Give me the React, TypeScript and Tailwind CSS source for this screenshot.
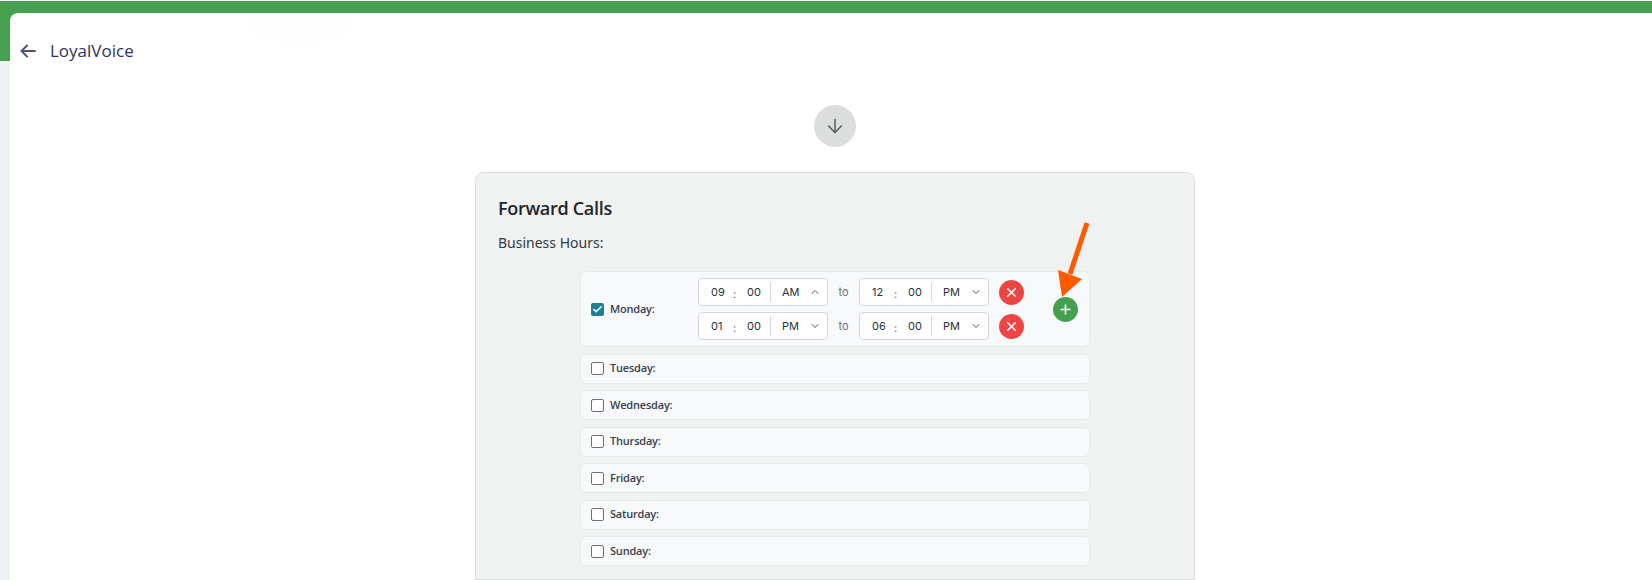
import React from 'react';
import { ArrowDown, ChevronUp, ChevronDown, X, Plus, Check } from 'lucide-react';

const noto = { fontFamily: '"Noto Sans", "Open Sans", sans-serif' };

interface TimeRange { hour: string; minute: string; period: string; open?: boolean; }

const TimeBox = ({ hour, minute, period, open }: TimeRange) => (
  <div className="flex items-center w-[130px] h-[28px] bg-white border border-[#d3d6de] rounded-[4px] text-[11px] text-[#2b3040] font-['Inter',sans-serif]">
    <span className="w-[34px] pl-[12px]">{hour}</span>
    <span className="w-[9px] text-[#6b7280] pt-[4px]">:</span>
    <span className="w-[28px] pl-[5px]">{minute}</span>
    <div className="w-px h-[20px] bg-[#d3d6de]" />
    <span className="w-[38px] pl-[11px]">{period}</span>
    {open ? <ChevronUp size={12} strokeWidth={2} className="text-[#4b5160]" /> : <ChevronDown size={12} strokeWidth={2} className="text-[#4b5160]" />}
  </div>
);

const RemoveButton = () => (
  <div className="w-[25px] h-[25px] rounded-full bg-[#ef4444] flex items-center justify-center text-white ml-[10px]">
    <X size={15} strokeWidth={2.5} />
  </div>
);

const Slot = ({ from, to }: { from: TimeRange; to: TimeRange }) => (
  <div className="flex items-center">
    <TimeBox {...from} />
    <span className="w-[31px] text-center text-[11px] text-[#6b7280] font-['Inter',sans-serif]">to</span>
    <TimeBox {...to} />
    <RemoveButton />
  </div>
);

const DayRow = ({ day }: { day: string }) => (
  <div className="flex items-center h-[30px] pl-[10px] bg-[#f8f9fb] border border-[#e8e9ec] rounded-[6px]">
    <div className="w-[13px] h-[13px] bg-white border border-[#6d6f75] rounded-[2px]" />
    <span className="ml-[6px] text-[11px] font-semibold text-[#374151] font-['Open_Sans',sans-serif] tracking-[-0.2px]">{day}</span>
  </div>
);

export default function App() {
  return (
    <div className="relative flex w-[1652px] h-[580px] overflow-hidden bg-white pt-px" style={noto}>
      <div className="w-[10px] flex flex-col shrink-0">
        <div className="h-[60px] bg-[#45a150]" />
        <div className="flex-1 bg-[#eef0f7]" />
      </div>
      <div className="flex-1 flex flex-col bg-[#45a150]">
        <div className="h-[12px] shrink-0" />
        <div className="relative flex-1 bg-white rounded-tl-[8px] flex flex-col overflow-hidden">
          {/* faint watermark behind the header */}
          <div className="absolute left-[235px] -top-[10px] w-[110px] h-[40px] rounded-b-full bg-[#fdfefd] blur-[6px]" />
          <div className="relative flex items-center h-[72px] pl-[10px] pt-[3px] shrink-0">
            <svg width="16" height="14" viewBox="0 0 16 14" fill="none" stroke="#4b5578" strokeWidth="2" strokeLinecap="round" strokeLinejoin="round">
              <path d="M15 7H2" />
              <path d="M7 1.5L1.5 7L7 12.5" />
            </svg>
            <span className="ml-[14px] text-[17px] font-medium text-[#2f3160] font-['Open_Sans',sans-serif]">LoyalVoice</span>
          </div>
          <div className="flex justify-center pl-[8px] pt-[20px] shrink-0">
            <div className="w-[42px] h-[42px] rounded-full bg-[#dcdedd] flex items-center justify-center text-[#55595c]">
              <ArrowDown size={22} strokeWidth={1.6} />
            </div>
          </div>
          <div className="w-[720px] ml-[465px] mt-[25px] flex-1 bg-[#f0f2f2] border border-[#dcdedf] rounded-t-[8px] pt-[22px] pl-[22px]">
            <h2 className="text-[18px] leading-[26px] font-semibold text-[#212529] font-['Open_Sans',sans-serif] tracking-[-0.3px]">Forward Calls</h2>
            <p className="mt-[12px] text-[14px] leading-[20px] text-[#333a40]">Business Hours:</p>
            <div className="w-[510px] ml-[82px] mt-[18px] flex flex-col gap-[6.5px]">
              <div className="relative flex items-center h-[76px] pl-[10px] bg-[#f8f9fb] border border-[#e8e9ec] rounded-[6px]">
                <div className="w-[13px] h-[13px] bg-[#1f7f96] rounded-[2px] flex items-center justify-center text-white">
                  <Check size={11} strokeWidth={3.5} />
                </div>
                <span className="ml-[6px] w-[88px] text-[11px] font-semibold text-[#374151] font-['Open_Sans',sans-serif] tracking-[-0.2px]">Monday:</span>
                <div className="flex flex-col gap-[6px]">
                  <Slot from={{ hour: '09', minute: '00', period: 'AM', open: true }} to={{ hour: '12', minute: '00', period: 'PM' }} />
                  <Slot from={{ hour: '01', minute: '00', period: 'PM' }} to={{ hour: '06', minute: '00', period: 'PM' }} />
                </div>
                <div className="w-[25px] h-[25px] rounded-full bg-[#43a04e] flex items-center justify-center text-white ml-[29px]">
                  <Plus size={15} strokeWidth={2.5} />
                </div>
              </div>
              {['Tuesday:', 'Wednesday:', 'Thursday:', 'Friday:', 'Saturday:', 'Sunday:'].map((day) => (
                <DayRow key={day} day={day} />
              ))}
            </div>
          </div>
        </div>
      </div>
      {/* annotation arrow */}
      <svg className="absolute left-0 top-0 pointer-events-none" width="1652" height="580">
        <line x1="1087" y1="223" x2="1070" y2="274" stroke="#ff5a00" strokeWidth="5" />
        <polygon points="1058,270 1082,279 1062,297" fill="#ff5a00" />
      </svg>
    </div>
  );
}
